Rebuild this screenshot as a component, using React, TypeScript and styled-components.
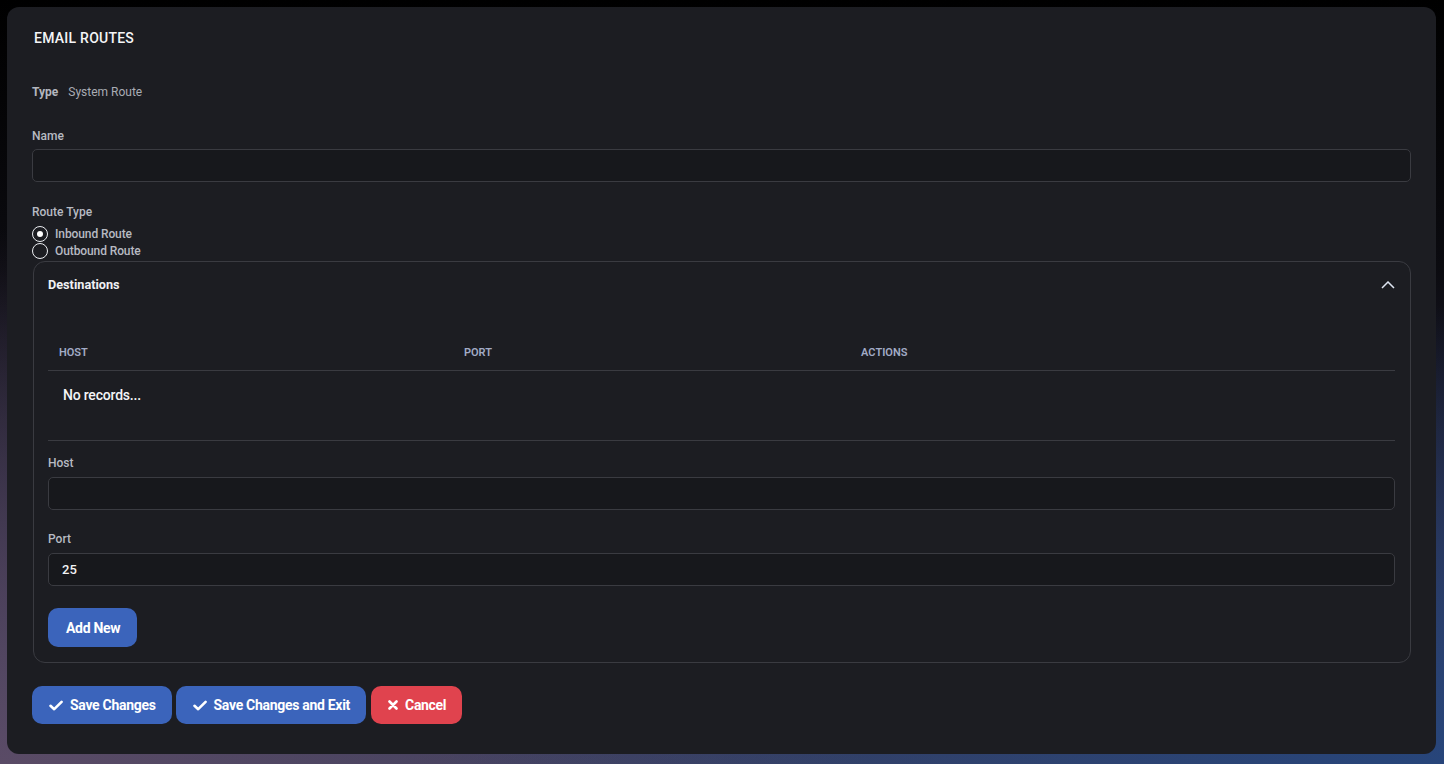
import styled, { createGlobalStyle } from "styled-components";

const GlobalStyle = createGlobalStyle`
  html, body {
    margin: 0;
    padding: 0;
    height: 100%;
  }
  body {
    font-family: Roboto, "Liberation Sans", Arial, sans-serif;
    background:
      radial-gradient(ellipse 70% 60% at 100% 100%, #27457a 0%, rgba(39, 69, 122, 0.6) 45%, rgba(39, 69, 122, 0) 100%),
      radial-gradient(ellipse 60% 70% at 0% 100%, #5a4b66 0%, rgba(90, 75, 102, 0.5) 50%, rgba(90, 75, 102, 0) 100%),
      linear-gradient(180deg, #000000 0%, #0b0b10 35%, #2a2840 75%, #3a3d5c 100%);
    overflow: hidden;
  }
  #root {
    height: 100%;
  }
`;

const Page = styled.div`
  height: 100vh;
  box-sizing: border-box;
  padding: 7px 8px 10px 7px;
`;

const Card = styled.section`
  height: 100%;
  box-sizing: border-box;
  background: #1c1d22;
  border-radius: 12px;
  padding: 21px 25px 0 25px;
  display: flex;
  flex-direction: column;
`;

const Title = styled.h1`
  margin: 0 0 36px 2px;
  font-size: 14px;
  line-height: 20px;
  font-weight: 500;
  letter-spacing: 0.25px;
  color: #f4f5f7;
`;

const TypeRow = styled.div`
  display: flex;
  gap: 10px;
  font-size: 12px;
  line-height: 16px;
  margin-bottom: 28px;
`;

const TypeKey = styled.span`
  font-weight: 700;
  color: #b3b6be;
`;

const TypeValue = styled.span`
  color: #a9acb4;
`;

const Field = styled.div<{ $gap?: number; $inner?: number }>`
  display: flex;
  flex-direction: column;
  gap: ${(p) => p.$inner ?? 6}px;
  margin-bottom: ${(p) => p.$gap ?? 0}px;
`;

const Label = styled.label`
  font-size: 12px;
  line-height: 16px;
  font-weight: 500;
  color: #b7bac2;
`;

const Input = styled.input`
  box-sizing: border-box;
  width: 100%;
  height: 33px;
  background: #17181c;
  border: 1px solid #3a3b41;
  border-radius: 5px;
  padding: 0 13px;
  color: #f2f3f5;
  font-family: inherit;
  font-size: 13px;
  font-weight: 500;
  outline: none;
`;

const RadioGroup = styled.div`
  display: flex;
  flex-direction: column;
  margin-top: 5px;
`;

const RadioRow = styled.label`
  display: flex;
  align-items: center;
  gap: 7px;
  height: 17px;
  font-size: 12px;
  font-weight: 500;
  letter-spacing: -0.1px;
  color: #b7bac2;
`;

const RadioDot = styled.span<{ $checked?: boolean }>`
  box-sizing: border-box;
  width: 16px;
  height: 16px;
  border-radius: 50%;
  border: 1.5px solid #eceef2;
  display: flex;
  align-items: center;
  justify-content: center;

  &::after {
    content: "";
    width: 6px;
    height: 6px;
    border-radius: 50%;
    background: #ffffff;
    display: ${(p) => (p.$checked ? "block" : "none")};
  }
`;

const Panel = styled.div`
  margin: 2px 0 0 1px;
  width: calc(100% - 1px);
  box-sizing: border-box;
  border: 1px solid #3a3b41;
  border-radius: 12px;
  padding: 15px 15px 15px 14px;
`;

const PanelHead = styled.div`
  display: flex;
  align-items: center;
  justify-content: space-between;
  height: 16px;
  margin-bottom: 41px;
`;

const PanelTitle = styled.h2`
  margin: 0;
  font-size: 12.7px;
  line-height: 16px;
  font-weight: 700;
  color: #f0f1f4;
`;

const Table = styled.table`
  width: 100%;
  border-collapse: collapse;
  table-layout: fixed;
  border-bottom: 1px solid #3a3b41;
`;

const Th = styled.th<{ $w: string }>`
  width: ${(p) => p.$w};
  text-align: left;
  font-size: 11px;
  font-weight: 600;
  color: #a2abc6;
  padding: 0 11px;
  height: 36px;
  border-bottom: 1px solid #3a3b41;
`;

const EmptyCell = styled.td`
  font-size: 14px;
  font-weight: 500;
  letter-spacing: -0.2px;
  color: #f4f5f7;
  padding: 14px 15px 35px 15px;
  line-height: 20px;
`;

const FormBlock = styled.div`
  margin-top: 14px;
  display: flex;
  flex-direction: column;
`;

const Button = styled.button<{ $variant?: "primary" | "danger" }>`
  display: inline-flex;
  align-items: center;
  justify-content: center;
  gap: 7px;
  height: 38px;
  padding: 0 16px 0 17px;
  border: none;
  border-radius: 10px;
  background: ${(p) => (p.$variant === "danger" ? "#e0434e" : "#3b64bb")};
  color: #ffffff;
  font-family: inherit;
  font-size: 14px;
  font-weight: 700;
  letter-spacing: -0.3px;
  cursor: pointer;
  white-space: nowrap;
`;

const AddButton = styled(Button)`
  height: 39px;
  padding: 0 17px 0 18px;
  align-self: flex-start;
  margin-top: 22px;
`;

const Actions = styled.div`
  display: flex;
  gap: 4px;
  margin-top: 23px;
`;

const Check = () => (
  <svg width="14" height="11" viewBox="0 0 14 11">
    <path d="M1.5 5.8 L5.2 9.2 L12.6 1.8" fill="none" stroke="#fff" strokeWidth="2.6" strokeLinecap="round" strokeLinejoin="round" />
  </svg>
);

const Cross = () => (
  <svg width="10" height="10" viewBox="0 0 10 10">
    <path d="M1.5 1.5 L8.5 8.5 M8.5 1.5 L1.5 8.5" fill="none" stroke="#fff" strokeWidth="2.6" strokeLinecap="round" />
  </svg>
);

const ChevronUp = () => (
  <svg width="14" height="8" viewBox="0 0 14 8">
    <path d="M1 7 L7 1 L13 7" fill="none" stroke="#dfe6f2" strokeWidth="1.5" />
  </svg>
);

export default function App() {
  return (
    <>
      <GlobalStyle />
      <Page>
        <Card>
          <Title>EMAIL ROUTES</Title>
          <TypeRow>
            <TypeKey>Type</TypeKey>
            <TypeValue>System Route</TypeValue>
          </TypeRow>
          <Field $gap={22} $inner={5}>
            <Label>Name</Label>
            <Input defaultValue="" />
          </Field>
          <Label>Route Type</Label>
          <RadioGroup>
            <RadioRow>
              <RadioDot $checked />
              Inbound Route
            </RadioRow>
            <RadioRow>
              <RadioDot />
              Outbound Route
            </RadioRow>
          </RadioGroup>
          <Panel>
            <PanelHead>
              <PanelTitle>Destinations</PanelTitle>
              <ChevronUp />
            </PanelHead>
            <Table>
              <thead>
                <tr>
                  <Th $w="29.9%">HOST</Th>
                  <Th $w="29.3%">PORT</Th>
                  <Th $w="40.8%">ACTIONS</Th>
                </tr>
              </thead>
              <tbody>
                <tr>
                  <EmptyCell colSpan={3}>No records...</EmptyCell>
                </tr>
              </tbody>
            </Table>
            <FormBlock>
              <Field $gap={21}>
                <Label>Host</Label>
                <Input defaultValue="" />
              </Field>
              <Field>
                <Label>Port</Label>
                <Input defaultValue="25" />
              </Field>
              <AddButton>Add New</AddButton>
            </FormBlock>
          </Panel>
          <Actions>
            <Button>
              <Check />
              Save Changes
            </Button>
            <Button>
              <Check />
              Save Changes and Exit
            </Button>
            <Button $variant="danger" style={{ marginLeft: 1 }}>
              <Cross />
              Cancel
            </Button>
          </Actions>
        </Card>
      </Page>
    </>
  );
}
